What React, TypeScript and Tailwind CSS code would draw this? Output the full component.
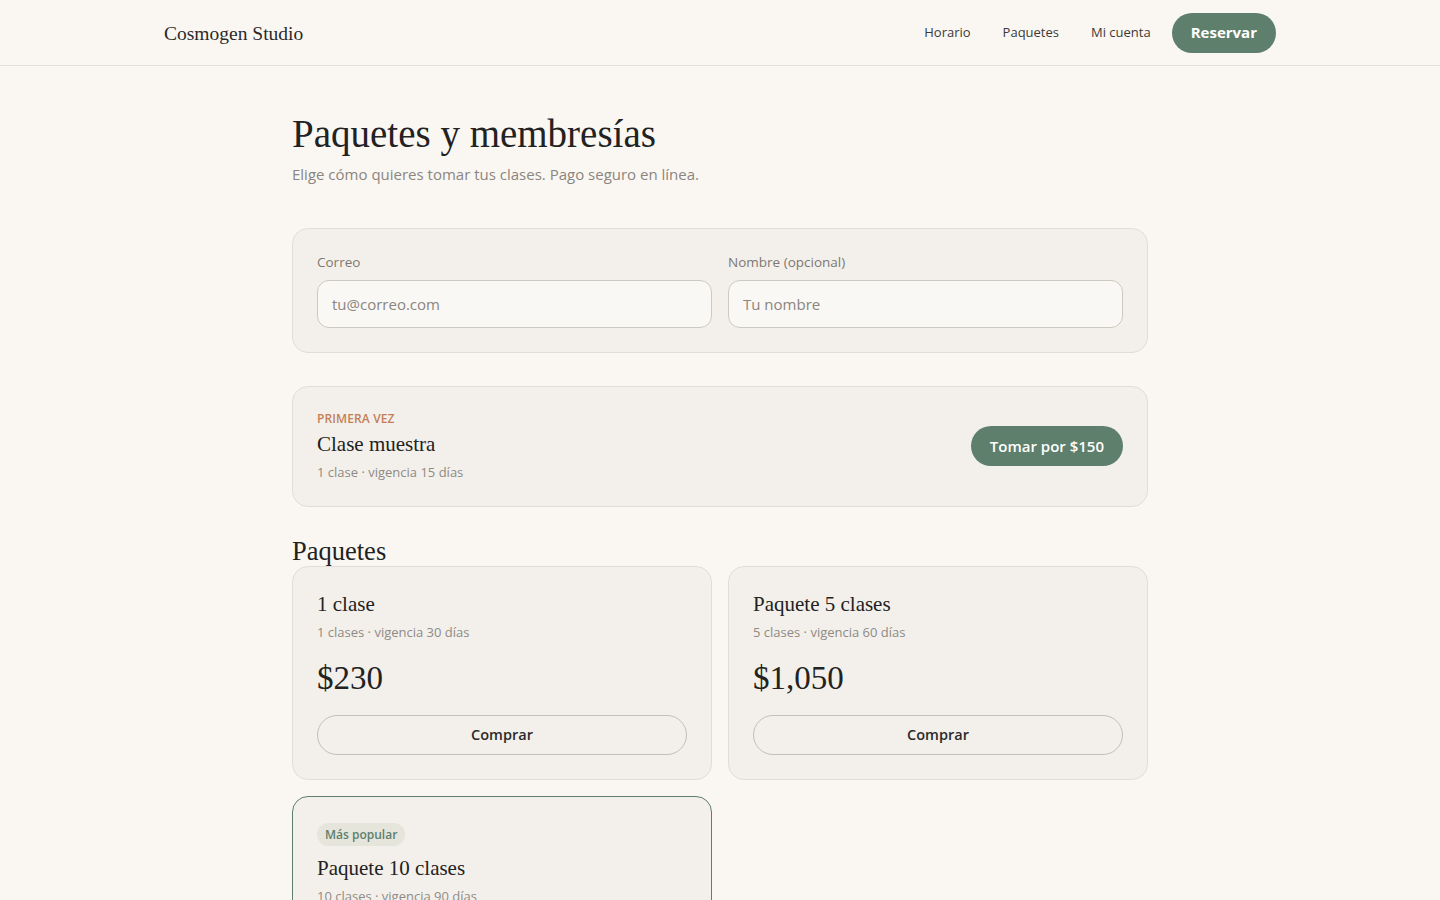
import React from "react";

const serif = "font-['Georgia','Liberation_Serif',serif]";
const sans = "font-['Segoe_UI','Open_Sans',sans-serif]";

type Pack = {
  name: string;
  meta: string;
  price: string;
  popular?: boolean;
};

const packs: Pack[] = [
  { name: "1 clase", meta: "1 clases · vigencia 30 días", price: "$230" },
  { name: "Paquete 5 clases", meta: "5 clases · vigencia 60 días", price: "$1,050" },
  { name: "Paquete 10 clases", meta: "10 clases · vigencia 90 días", price: "$1,900", popular: true },
];

function PackCard({ p }: { p: Pack }) {
  return (
    <div
      className={`rounded-2xl border bg-[#f3f0eb] px-6 pt-[23px] pb-[24px] ${
        p.popular ? "border-[#5e7f6c]" : "border-[#e2ddd5]"
      }`}
    >
      {p.popular && (
        <span className="mt-[3px] mb-2 inline-block rounded-full bg-[#e5e5dc] px-2 py-1 text-[12px] font-semibold leading-[15px] text-[#5e7f6c]">
          Más popular
        </span>
      )}
      <h3 className={`${serif} text-[21px] leading-[28px] text-[#222]`}>{p.name}</h3>
      <p className="mt-1 text-[13px] leading-[20px] text-[#8f8a84]">{p.meta}</p>
      <p className={`${serif} mt-[18px] text-[33px] leading-[36px] text-[#222]`}>{p.price}</p>
      <button className="mt-[19px] h-10 w-full rounded-full border border-[#c4bfb7] text-[14.5px] font-semibold text-[#2a2a2a]">
        Comprar
      </button>
    </div>
  );
}

export default function App() {
  return (
    <div className={`${sans} min-h-screen bg-[#faf7f2] text-[#2a2a2a]`}>
      <header className="border-b border-[#e4dfd7]">
        <div className="mx-auto flex h-[65px] max-w-6xl items-center justify-between px-5">
          <a className={`${serif} pt-[2px] text-[19.5px] text-[#2a2a2a]`}>Cosmogen Studio</a>
          <nav className="flex items-center">
            <a className="px-4 text-[13px] text-[#3a3a3a]">Horario</a>
            <a className="px-4 text-[13px] text-[#3a3a3a]">Paquetes</a>
            <a className="px-4 text-[13px] text-[#3a3a3a]">Mi cuenta</a>
            <button className="ml-[5px] h-10 rounded-full bg-[#5e7f6c] px-[19px] text-[15px] font-bold text-white">
              Reservar
            </button>
          </nav>
        </div>
      </header>

      <main className="mx-auto max-w-4xl px-5 pt-[44px]">
        <h1 className={`${serif} text-[39px] leading-[48px] text-[#222]`}>Paquetes y membresías</h1>
        <p className="mt-[5px] text-[15px] leading-[22px] text-[#8a857f]">
          Elige cómo quieres tomar tus clases. Pago seguro en línea.
        </p>

        <section className="mt-[43px] rounded-2xl border border-[#e2ddd5] bg-[#f3f0eb] px-6 pt-[23px] pb-6">
          <div className="grid grid-cols-2 gap-4">
            <label className="block">
              <span className="mb-2 block text-[13.5px] font-medium leading-[20px] text-[#7d7872]">Correo</span>
              <input
                placeholder="tu@correo.com"
                className="h-12 w-full rounded-xl border border-[#cdc8c1] bg-[#faf8f4] px-[14px] text-[15px] text-[#2a2a2a] outline-none placeholder:text-[#8a857f]"
              />
            </label>
            <label className="block">
              <span className="mb-2 block text-[13.5px] font-medium leading-[20px] text-[#7d7872]">Nombre (opcional)</span>
              <input
                placeholder="Tu nombre"
                className="h-12 w-full rounded-xl border border-[#cdc8c1] bg-[#faf8f4] px-[14px] text-[15px] text-[#2a2a2a] outline-none placeholder:text-[#8a857f]"
              />
            </label>
          </div>
        </section>

        <section className="mt-[33px] flex items-center justify-between rounded-2xl border border-[#e2ddd5] bg-[#f3f0eb] px-6 pt-[23px] pb-6">
          <div>
            <p className="text-[12px] font-semibold uppercase leading-[18px] tracking-[0.01em] text-[#c47f56]">
              Primera vez
            </p>
            <h3 className={`${serif} mt-0.5 text-[21px] leading-[28px] text-[#222]`}>Clase muestra</h3>
            <p className="mt-1 text-[13px] leading-[20px] text-[#8f8a84]">1 clase · vigencia 15 días</p>
          </div>
          <button className="h-10 rounded-full bg-[#5e7f6c] px-[19px] text-[15px] font-semibold text-white">
            Tomar por $150
          </button>
        </section>

        <h2 className={`${serif} mt-[30px] text-[26.5px] leading-[29px] text-[#222]`}>Paquetes</h2>
        <div className="grid grid-cols-2 gap-4">
          {packs.map((p) => (
            <PackCard key={p.name} p={p} />
          ))}
        </div>
        <div className="h-16" />
      </main>
    </div>
  );
}
